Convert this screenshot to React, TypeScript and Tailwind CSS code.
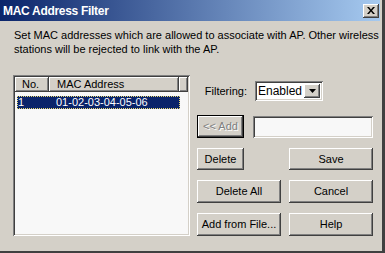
import React from "react";

const raised =
  "shadow-[inset_-1px_-1px_#404040,inset_1px_1px_#ffffff,inset_-2px_-2px_#808080,inset_2px_2px_#d4d0c8]";
const sunken =
  "shadow-[inset_1px_1px_#808080,inset_-1px_-1px_#ffffff,inset_2px_2px_#404040,inset_-2px_-2px_#d4d0c8]";

function Btn({ children, w, h = "h-[23px]" }: { children: React.ReactNode; w: string; h?: string }) {
  return (
    <div className={`${w} ${h} ${raised} bg-[#d4d0c8] flex items-center justify-center text-black`}>
      {children}
    </div>
  );
}

export default function App() {
  return (
    <div
      className="w-[385px] h-[253px] bg-[#d4d0c8] flex flex-col text-[11px] text-black overflow-hidden border-r-[3px] border-b-[2px] border-r-[#404040] border-b-[#404040]"
      style={{ fontFamily: '"Liberation Sans", Arial, sans-serif' }}
    >
      {/* title bar */}
      <div className="h-[21px] flex items-center justify-between pl-[3px] pr-[1px] bg-[linear-gradient(to_right,#0a246a,#a6caf0)] mr-[2px]">
        <span className="text-white font-bold text-[12px] tracking-[-0.3px]">MAC Address Filter</span>
        <div className={`w-[16px] h-[14px] ${raised} bg-[#d4d0c8] flex items-center justify-center`}>
          <svg width="8" height="7" viewBox="0 0 8 7">
            <path d="M0 0h2l2 2.5L6 0h2L5 3.5 8 7H6L4 4.5 2 7H0l3-3.5z" fill="#000" />
          </svg>
        </div>
      </div>

      {/* description */}
      <div className="pl-[14px] pt-[7px] leading-[14px]">
        Set MAC addresses which are allowed to associate with AP. Other wireless
        <br />
        stations will be rejected to link with the AP.
      </div>

      {/* main */}
      <div className="flex pl-[13px] mt-[19px] gap-[7px]">
        {/* listbox */}
        <div className={`w-[177px] h-[161px] bg-[#f8f8f8] ${sunken} p-[2px] flex flex-col`}>
          <div className="flex h-[15px]">
            <div className={`w-[34px] ${raised} bg-[#d4d0c8] pl-[7px] leading-[15px]`}>No.</div>
            <div className={`w-[130px] ${raised} bg-[#d4d0c8] pl-[8px] leading-[15px]`}>MAC Address</div>
            <div className={`flex-1 ${raised} bg-[#d4d0c8]`}></div>
          </div>
          <div className="mt-[4px] ml-[2px] w-[163px] h-[13px] bg-[#0a246a] text-white flex items-center outline-dotted outline-1 outline-[#e8d870] -outline-offset-1">
            <span className="w-[39px] pl-[1px]">1</span>
            <span>01-02-03-04-05-06</span>
          </div>
        </div>

        {/* right column */}
        <div className="w-[176px] flex flex-col">
          <div className="flex items-center justify-end mt-[6px] mr-[50px] gap-[8px]">
            <span>Filtering:</span>
            <div className={`w-[68px] h-[20px] bg-white ${sunken} flex items-center justify-between pl-[3px] pr-[3px]`}>
              <span className="text-[12px]">Enabled</span>
              <div className={`w-[16px] h-[14px] ${raised} bg-[#d4d0c8] flex items-center justify-center`}>
                <svg width="7" height="4" viewBox="0 0 7 4">
                  <path d="M0 0h7L3.5 4z" fill="#000" />
                </svg>
              </div>
            </div>
          </div>

          <div className="flex items-center mt-[14px] gap-[9px]">
            <div className="w-[47px] h-[23px] border border-black">
              <div className={`w-full h-full ${raised} bg-[#d4d0c8] flex items-center justify-center text-[#808080] [text-shadow:1px_1px_#ffffff]`}>
                &lt;&lt; Add
              </div>
            </div>
            <div className={`w-[120px] h-[22px] bg-[#f8f8f8] ${sunken}`}></div>
          </div>

          <div className="flex justify-between mt-[10px]">
            <Btn w="w-[47px]" h="h-[22px]">Delete</Btn>
            <Btn w="w-[84px]" h="h-[22px]">Save</Btn>
          </div>
          <div className="flex justify-between mt-[10px]">
            <Btn w="w-[84px]">Delete All</Btn>
            <Btn w="w-[84px]">Cancel</Btn>
          </div>
          <div className="flex justify-between mt-[10px]">
            <Btn w="w-[84px]">Add from File...</Btn>
            <Btn w="w-[84px]">Help</Btn>
          </div>
        </div>
      </div>
    </div>
  );
}
